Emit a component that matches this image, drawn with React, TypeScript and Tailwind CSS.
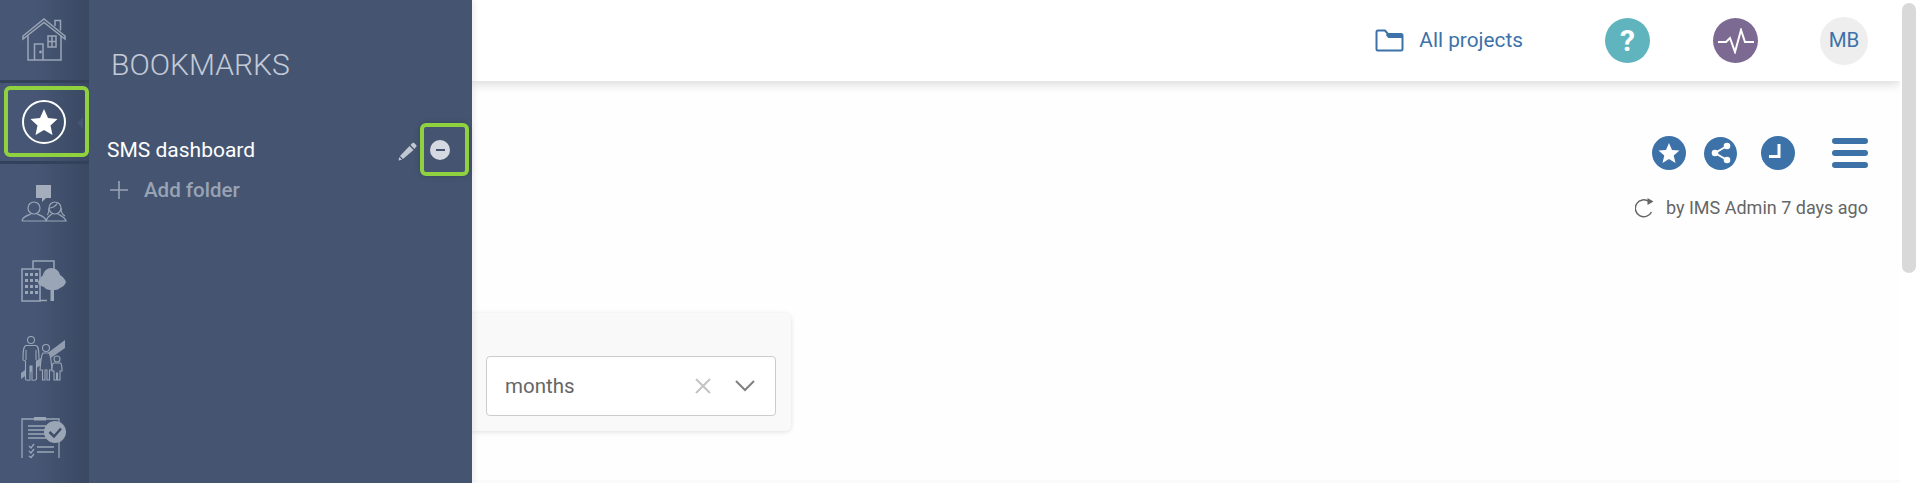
const ROBOTO = "font-['Roboto',sans-serif]";

function HouseIcon() {
  return (
    <svg width="46" height="46" viewBox="0 0 46 46" fill="none" stroke="#9aa5b6" strokeWidth="1.5">
      <path d="M2 19 L23 2 L44 19 L44 22 L23 5.5 L2 22 Z" />
      <path d="M34 9 V3.5 H39.5 V13.5" />
      <path d="M7 18.5 V43 H40 V18.5" />
      <path d="M13.5 43 V27 H22 V43" />
      <rect x="27" y="19" width="8" height="11" />
      <path d="M31 19 V30 M27 24.5 H35" />
      <circle cx="19.5" cy="35" r="0.7" fill="#9aa5b6" />
    </svg>
  );
}

function StarBadgeIcon() {
  return (
    <svg width="46" height="46" viewBox="0 0 46 46">
      <circle cx="23" cy="23" r="21" fill="none" stroke="#fff" strokeWidth="2" />
      <path d="M23 10 L27 19 L36.5 20 L29.5 26.5 L31.5 36 L23 31 L14.5 36 L16.5 26.5 L9.5 20 L19 19 Z" fill="#fff" />
    </svg>
  );
}

function ChatPeopleIcon() {
  return (
    <svg width="46" height="38" viewBox="0 0 46 38" fill="none" stroke="#9aa5b6" strokeWidth="1.2">
      <path d="M15 1 H30 V14 H25 L21 18 V14 H15 Z" fill="#a3adbc" stroke="none" />
      <circle cx="13" cy="24" r="6" />
      <path d="M1 37 C1 33 6 31.5 10 30 M16 30 C20 31.5 25 33 25 37 H1" />
      <circle cx="34" cy="24" r="6" />
      <path d="M28 24 C31 24 35 22 36 19.5 M28 24 C28 27 27.5 29 26.5 31 M40 24 C40 28 42 31 44 32" />
      <path d="M25 37 C26 33 28 32 31 30 M37 30 C40 32 44 33 45 37 H25" />
    </svg>
  );
}

function BuildingIcon() {
  return (
    <svg width="46" height="42" viewBox="0 0 46 42" fill="none" stroke="#9aa5b6" strokeWidth="1.5">
      <path d="M12 9 V1 H33 V10" />
      <rect x="1" y="9" width="18" height="32" />
      <path d="M19 40.5 H26" />
      <g fill="#9aa5b6" stroke="none">
        <rect x="4" y="13" width="3" height="3" />
        <rect x="9" y="13" width="3" height="3" />
        <rect x="14" y="13" width="3" height="3" />
        <rect x="4" y="19" width="3" height="3" />
        <rect x="9" y="19" width="3" height="3" />
        <rect x="14" y="19" width="3" height="3" />
        <rect x="4" y="25" width="3" height="3" />
        <rect x="9" y="25" width="3" height="3" />
        <rect x="14" y="25" width="3" height="3" />
        <rect x="4" y="31" width="3" height="3" />
        <rect x="9" y="31" width="3" height="3" />
        <rect x="14" y="31" width="3" height="3" />
        <path d="M30 8 C35 8 38 11 39 15 C41 16 44 19 45 22 C44 25 42 27 39 28 C37 30 34 30 33 30 V41 H29.5 V30 C27 30 24 29 23 27 C20 26 17 25 17 22 C18 19 20 17 22 15 C23 11 26 8 30 8 Z" />
      </g>
    </svg>
  );
}

function FamilyIcon() {
  return (
    <svg width="46" height="46" viewBox="0 0 46 46" fill="none" stroke="#9aa5b6" strokeWidth="1.1">
      <path d="M0 37 L44 4 V12 L0 43 Z" fill="#9aa5b6" stroke="none" opacity="0.9" />
      <circle cx="10" cy="4" r="3.5" fill="#455571" />
      <path d="M5 9.5 H15 C17 10 18 12 18 24 L15.5 25 V43 C15.5 44 14 44.5 11 44 V30 H9 V44 C6 44.5 4.5 44 4.5 43 V25 L2 24 C2 12 3 10 5 9.5 Z" fill="#455571" />
      <path d="M5 14 V24 M15 14 V24" />
      <circle cx="25" cy="12" r="3.5" fill="#455571" />
      <path d="M22 17 H28 C30 19 30 24 31 34 H28.5 V44 H26 V34 H24 V44 H21.5 V34 H19 C20 24 20 19 22 17 Z" fill="#455571" />
      <circle cx="36" cy="23" r="3" fill="#455571" />
      <path d="M32.5 27 H39.5 C41 28 41 31 41 35 H39 V44 H36.5 V37 H35.5 V44 H33 V35 H31 C31 31 31 28 32.5 27 Z" fill="#455571" />
    </svg>
  );
}

function ClipboardIcon() {
  return (
    <svg width="46" height="42" viewBox="0 0 46 42" fill="none" stroke="#9aa5b6" strokeWidth="1.3">
      <path d="M1 41 V2 H38 V41" />
      <rect x="13" y="0" width="12" height="3.5" fill="#9aa5b6" stroke="none" />
      <path d="M7 9 H26 M7 13 H26 M7 17 H26 M7 21 H26" />
      <circle cx="34" cy="15" r="11" fill="#9aa5b6" stroke="none" />
      <path d="M28.5 15 L33 19.5 L40 11.5" stroke="#3e4d68" strokeWidth="2.5" />
      <path d="M8 29 L10 31 L13 27 M8 34 L10 36 L13 32 M8 39 L10 40.5 L13 37" />
      <path d="M16 30 H33 M16 35 H33" />
    </svg>
  );
}

function Pencil() {
  return (
    <svg width="19" height="19" viewBox="0 0 19 19" fill="#c2c8d2">
      <path d="M5 17 L2 14 L11.5 4 L15.5 8 Z" />
      <path d="M0.5 18.5 L1.3 15 L4 17.7 Z" />
      <path d="M12.5 3 L14.5 1 C15 0.5 15.7 0.5 16.2 1 L18.2 3 C18.7 3.5 18.7 4.2 18.2 4.7 L16.4 7 Z" />
    </svg>
  );
}

function RailItem({ h, children }: { h: string; children: React.ReactNode }) {
  return <div className={`flex items-center justify-center pr-[1px] ${h}`}>{children}</div>;
}

export default function App() {
  return (
    <div className={`flex h-[483px] w-[1919px] overflow-hidden bg-white ${ROBOTO}`}>
      <nav className="z-20 flex w-[89px] shrink-0 flex-col bg-gradient-to-r from-[#465674] from-40% to-[#3a4862]">
        <RailItem h="h-[80px]">
          <HouseIcon />
        </RailItem>
        <div className="h-[3px] bg-[#33415a]" />
        <div className="relative mt-[3px] ml-[4px] flex h-[71px] w-[85px] items-center justify-center rounded-[6px] border-4 border-[#8fd13f] pr-[5px]">
          <StarBadgeIcon />
          <span className="absolute top-[27px] right-[2px] h-0 w-0 border-y-[6px] border-r-[6px] border-y-transparent border-r-[#455571]" />
        </div>
        <div className="mt-[4px] h-[3px] bg-[#33415a]" />
        <RailItem h="mt-[20px] h-[38px]">
          <ChatPeopleIcon />
        </RailItem>
        <RailItem h="mt-[38px] h-[42px]">
          <BuildingIcon />
        </RailItem>
        <RailItem h="mt-[34px] h-[46px]">
          <FamilyIcon />
        </RailItem>
        <RailItem h="mt-[35px] h-[42px]">
          <ClipboardIcon />
        </RailItem>
      </nav>

      <aside className="z-10 flex w-[383px] shrink-0 flex-col bg-[#455571] shadow-[2px_0_6px_rgba(0,0,0,0.08)]">
        <h2 className="mt-[47px] ml-[22px] text-[30px] leading-[36px] font-light text-[#c3cad6]">BOOKMARKS</h2>
        <div className="relative mt-[40px] flex h-[53px] items-center pt-[3px] pl-[18px]">
          <span className="text-[21px] text-white">SMS dashboard</span>
          <span className="absolute top-[19px] right-[55px]">
            <Pencil />
          </span>
          <span className="absolute top-0 right-[3px] flex h-[53px] w-[49px] items-center justify-center rounded-[6px] border-4 border-[#8fd13f] pr-[9px] shadow-[0_0_6px_rgba(0,0,0,0.2)]">
            <span className="flex h-[20px] w-[20px] shrink-0 items-center justify-center rounded-full bg-[#d5d9e1]">
              <span className="h-[2px] w-[9px] bg-[#455571]" />
            </span>
          </span>
        </div>
        <div className="-mt-[1px] flex items-center pl-[20px] text-[20.5px] text-[#98a3b4]">
          <svg width="20" height="20" viewBox="0 0 20 20" stroke="#98a3b4" strokeWidth="1.6">
            <path d="M10 1 V19 M1 10 H19" />
          </svg>
          <span className="ml-[15px] font-medium">Add folder</span>
        </div>
      </aside>

      <main className="flex min-w-0 flex-1 flex-col bg-[#fefefe]">
        <header className="flex h-[81px] shrink-0 items-center justify-end bg-white pr-[32px] shadow-[0_3px_10px_rgba(0,0,0,0.15)]">
          <svg width="29" height="23" viewBox="0 0 29 23" fill="none" stroke="#3c72a8" strokeWidth="2">
            <path d="M1.5 20 V3 C1.5 2 2 1.5 3 1.5 H10 L13 5 H26 C27 5 27.5 5.5 27.5 6.5 V20 C27.5 21 27 21.5 26 21.5 H3 C2 21.5 1.5 21 1.5 20 Z" />
            <path d="M12 5 L14 7.5 H27" strokeWidth="3" />
          </svg>
          <span className="ml-[15px] text-[20.8px] text-[#3c72a8]">All projects</span>
          <span className="ml-[82px] flex h-[45px] w-[45px] items-center justify-center rounded-full bg-[#5fb4bd] text-[30px] leading-none font-bold text-white">
            ?
          </span>
          <span className="ml-[63px] flex h-[45px] w-[45px] items-center justify-center rounded-full bg-[#7d6a92]">
            <svg width="38" height="26" viewBox="0 0 38 26" fill="none" stroke="#fff" strokeWidth="2">
              <path d="M1 14 H9 L13 10 L18 24 L24 2 L28 14 H37" />
            </svg>
          </span>
          <span className="ml-[62px] flex h-[48px] w-[48px] items-center justify-center rounded-full bg-[#eeeeee] text-[20.5px] text-[#3c72a8]">
            MB
          </span>
        </header>

        <div className="mt-[55px] flex items-center justify-end pr-[32px]">
          <span className="flex h-[34px] w-[34px] items-center justify-center rounded-full bg-[#3c72a8]">
            <svg width="22" height="22" viewBox="0 0 22 22" fill="#fff">
              <path d="M11 1 L14 8 L21.5 8.5 L15.7 13.5 L17.5 21 L11 17 L4.5 21 L6.3 13.5 L0.5 8.5 L8 8 Z" />
            </svg>
          </span>
          <span className="ml-[18px] flex h-[33px] w-[33px] items-center justify-center rounded-full bg-[#3c72a8]">
            <svg width="22" height="24" viewBox="0 0 22 24" fill="#fff" stroke="#fff" strokeWidth="2">
              <path d="M17 5 L5 12 L17 19" fill="none" />
              <circle cx="17" cy="5" r="2.3" />
              <circle cx="5" cy="12" r="2.3" />
              <circle cx="17" cy="19" r="2.3" />
            </svg>
          </span>
          <span className="ml-[24px] flex h-[34px] w-[34px] items-center justify-center rounded-full bg-[#3c72a8]">
            <svg width="34" height="34" viewBox="0 0 34 34" fill="none" stroke="#fff" strokeWidth="3">
              <path d="M18 8 V20.5 H8" />
            </svg>
          </span>
          <span className="ml-[37px] flex w-[36px] flex-col gap-[6px]">
            <span className="h-[6px] rounded-full bg-[#3c72a8]" />
            <span className="h-[6px] rounded-full bg-[#3c72a8]" />
            <span className="h-[6px] rounded-full bg-[#3c72a8]" />
          </span>
        </div>

        <div className="mt-[27px] flex items-center justify-end pr-[32px] text-[18px] leading-[22px] text-[#666666]">
          <svg width="20" height="20" viewBox="0 0 20 20" fill="none" stroke="#666666" strokeWidth="1.5">
            <path d="M16.5 14 A8.5 8.5 0 1 1 14 3.5" />
            <path d="M12.5 0 L18.5 3.5 L12.5 7 Z" fill="#666666" stroke="none" />
          </svg>
          <span className="ml-[11px]">by IMS Admin 7 days ago</span>
        </div>

        <div className="mt-[94px] flex h-[118px] w-[319px] items-center rounded-r-[6px] bg-[#f9f9f9] pt-[27px] pr-[15px] pl-[14px] shadow-[0_1px_5px_rgba(0,0,0,0.12)]">
          <div className="flex h-[60px] flex-1 items-center rounded-[4px] border border-[#cccccc] bg-white pr-[20px] pl-[18px]">
            <span className="flex-1 pt-[1px] text-[20.5px] text-[#666666]">months</span>
            <svg width="16" height="16" viewBox="0 0 16 16" stroke="#c4c4c4" strokeWidth="2">
              <path d="M1 1 L15 15 M15 1 L1 15" />
            </svg>
            <svg className="ml-[24px]" width="20" height="12" viewBox="0 0 20 12" fill="none" stroke="#808080" strokeWidth="2">
              <path d="M1 1 L10 10 L19 1" />
            </svg>
          </div>
        </div>

        <div className="mt-auto h-[3px] bg-[#fafafa]" />
      </main>

      <div className="w-[19px] shrink-0 bg-white pt-[3px] pl-[2px]">
        <div className="h-[270px] w-[14px] rounded-full bg-[#d9d9d9]" />
      </div>
    </div>
  );
}
